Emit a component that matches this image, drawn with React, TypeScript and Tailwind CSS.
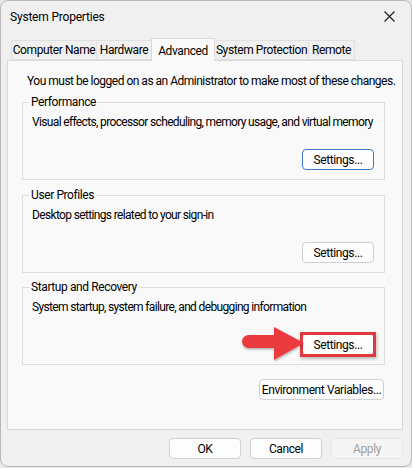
import React from "react";

const font = { fontFamily: 'Roboto, "Liberation Sans", Arial, sans-serif' };

function Btn({
  children,
  w,
  blue,
  disabled,
}: {
  children: React.ReactNode;
  w: string;
  blue?: boolean;
  disabled?: boolean;
}) {
  return (
    <div
      className={`${w} h-[21px] flex items-center justify-center rounded-[4px] border text-[12px] leading-none whitespace-nowrap ${
        blue
          ? "border-[#3a78c4] bg-[#fdfdfd] text-black"
          : disabled
          ? "border-[#e5e5e5] bg-[#f5f5f5] text-[#a0a0a0]"
          : "border-[#d0d0d0] bg-[#fdfdfd] text-black"
      }`}
    >
      {children}
    </div>
  );
}

function Group({
  title,
  desc,
  button,
  className = "",
}: {
  title: string;
  desc: string;
  button: React.ReactNode;
  className?: string;
}) {
  return (
    <div className={`border border-[#dcdcdc] flex flex-col ${className}`}>
      <div className="-mt-[9px] h-[16px] flex">
        <span className="ml-[6px] px-[2px] bg-[#f9f9f9] leading-[16px] text-[12px] text-black whitespace-nowrap">
          {title}
        </span>
      </div>
      <div className="mt-[4px] pl-[9px] leading-[16px] text-[12px] text-black whitespace-nowrap tracking-[-0.65px]">{desc}</div>
      <div className="mt-[19px] mb-[9px] mr-[10px] flex justify-end">{button}</div>
    </div>
  );
}

const tabs = [
  { label: "Computer Name", w: "w-[86px]" },
  { label: "Hardware", w: "w-[56px]" },
  { label: "Advanced", w: "w-[64px]", active: true },
  { label: "System Protection", w: "w-[95px]" },
  { label: "Remote", w: "w-[47px]" },
];

export default function App() {
  return (
    <div className="w-[412px] h-[468px] bg-[#e8e8e8] tracking-[-0.4px]" style={font}>
      <div className="w-[412px] h-[467px] rounded-[8px] border border-[#b8b8b8] bg-[#f0f0f0] flex flex-col overflow-hidden">
        {/* Title bar */}
        <div className="h-[31px] flex items-center justify-between pl-[9px] pr-[12px]">
          <span className="text-[12px] text-black leading-none whitespace-nowrap tracking-[-0.2px]">System Properties</span>
          <svg width="11" height="11" viewBox="0 0 11 11" className="mr-[4px]">
            <path d="M0.5 0.5 L10.5 10.5 M10.5 0.5 L0.5 10.5" stroke="#1a1a1a" strokeWidth="1.1" fill="none" />
          </svg>
        </div>

        {/* Tabs */}
        <div className="mt-[7px] pl-[10px] flex items-end h-[21px] relative z-10">
          {tabs.map((t) =>
            t.active ? (
              <div
                key={t.label}
                className={`${t.w} h-[23px] -mb-[1px] -ml-[1px] border border-b-0 border-[#d9d9d9] bg-[#f9f9f9] flex items-start justify-center pt-[3px] text-[12px] text-black whitespace-nowrap`}
              >
                {t.label}
              </div>
            ) : (
              <div
                key={t.label}
                className={`${t.w} h-[20px] border border-[#e0e0e0] bg-[#f0f0f0] flex items-center justify-center text-[12px] text-black -ml-[1px] first:ml-0 whitespace-nowrap`}
              >
                {t.label}
              </div>
            )
          )}
        </div>

        {/* Panel */}
        <div className="ml-[6px] w-[396px] h-[370px] border border-[#d9d9d9] bg-[#f9f9f9] flex flex-col pl-[14px] pr-[17px] pt-[12px]">
          <div className="ml-[5px] leading-[16px] text-[12px] text-black whitespace-nowrap tracking-[-0.5px]">
            You must be logged on as an Administrator to make most of these changes.
          </div>

          <Group
            className="mt-[13px]"
            title="Performance"
            desc="Visual effects, processor scheduling, memory usage, and virtual memory"
            button={<Btn w="w-[72px]" blue>Settings...</Btn>}
          />
          <Group
            className="mt-[15px]"
            title="User Profiles"
            desc="Desktop settings related to your sign-in"
            button={<Btn w="w-[72px]">Settings...</Btn>}
          />
          <Group
            className="mt-[14px]"
            title="Startup and Recovery"
            desc="System startup, system failure, and debugging information"
            button={
              <div className="relative">
                <Btn w="w-[72px]">Settings...</Btn>
                <div className="absolute -inset-[2px] border-[3px] border-[#e2383d] shadow-[1px_2px_3px_rgba(0,0,0,0.25)]" />
                <svg
                  className="absolute left-[-61px] top-[-8px]"
                  width="64"
                  height="36"
                  viewBox="0 0 64 36"
                >
                  <defs>
                    <filter id="sh" x="-10%" y="-10%" width="130%" height="140%">
                      <feDropShadow dx="0.5" dy="1.5" stdDeviation="1" floodColor="#000" floodOpacity="0.3" />
                    </filter>
                  </defs>
                  <g filter="url(#sh)">
                    <rect x="1" y="9" width="38" height="13" rx="6.5" fill="#ec3b40" />
                    <polygon points="33,1 63,17 33,34" fill="#ec3b40" />
                  </g>
                </svg>
              </div>
            }
          />

          <div className="mt-[14px] flex justify-end mr-[1px]">
            <Btn w="w-[125px]">Environment Variables...</Btn>
          </div>
        </div>

        {/* Bottom buttons */}
        <div className="mt-[8px] flex justify-end gap-[9px] pr-[8px]">
          <Btn w="w-[72px]">OK</Btn>
          <Btn w="w-[72px]">Cancel</Btn>
          <Btn w="w-[72px]" disabled>
            Apply
          </Btn>
        </div>
      </div>
    </div>
  );
}
